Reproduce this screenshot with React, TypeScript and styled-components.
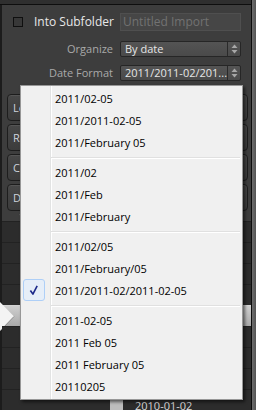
import React from 'react';
import styled, { createGlobalStyle } from 'styled-components';

const Global = createGlobalStyle`
  html, body { margin: 0; padding: 0; background: #3d3d3d; }
  body { font-family: "Open Sans", "Noto Sans", sans-serif; }
  #root { width: 256px; height: 410px; overflow: hidden; position: relative; }
`;

const Frame = styled.div`
  position: relative;
  display: flex;
  width: 256px;
  height: 410px;
  overflow: hidden;
`;

const Main = styled.div`
  flex: 1;
  display: flex;
  flex-direction: column;
  background: #3d3d3d;
  border-left: 2px solid #1c1c1c;
  border-right: 1px solid #0c0c0c;
  min-width: 0;
`;

const WindowEdge = styled.div`
  width: 4px;
  background: linear-gradient(to right, #6e6e6e, #545454);
`;

const TopStrip = styled.div`
  height: 5px;
  background: #2f2f2f;
  border-bottom: 1px solid #0e0e0e;
  margin-left: -2px;
`;

const Row = styled.div<{ $top: number; $h: number }>`
  display: flex;
  align-items: center;
  height: ${(p) => p.$h}px;
  margin-top: ${(p) => p.$top}px;
  padding-right: 10px;
`;

const CheckBox = styled.div`
  box-sizing: border-box;
  width: 10px;
  height: 10px;
  margin-left: 11px;
  border: 1px solid #0f0f0f;
  background: #383838;
`;

const BrightLabel = styled.span`
  margin-left: 11px;
  font-size: 12px;
  color: #e8e8e8;
  white-space: nowrap;
`;

const TextField = styled.div`
  box-sizing: border-box;
  margin-left: auto;
  width: 121px;
  height: 18px;
  background: #464646;
  border: 1px solid #4f4f4f;
  color: #727272;
  font-size: 12px;
  line-height: 16px;
  padding-left: 2px;
  white-space: nowrap;
`;

const FieldLabel = styled.span`
  width: 111px;
  text-align: right;
  font-size: 11px;
  color: #a9a9a9;
  white-space: nowrap;
`;

const Select = styled.div`
  box-sizing: border-box;
  margin-left: 7px;
  width: 121px;
  height: 16px;
  display: flex;
  background: linear-gradient(#545454, #4a4a4a);
  border: 1px solid #262626;
  border-radius: 2px;
  color: #e6e6e6;
  font-size: 11px;
  line-height: 14px;
`;

const SelectText = styled.span`
  flex: 1;
  padding-left: 4px;
  white-space: nowrap;
  overflow: hidden;
`;

const SelectArrows = styled.span`
  width: 12px;
  border-left: 1px solid #2a2a2a;
  display: flex;
  align-items: center;
  justify-content: center;
`;

const Buttons = styled.div`
  display: flex;
  flex-direction: column;
  gap: 3px;
  margin: 13px 3px 0 5px;
`;

const PanelButton = styled.div`
  box-sizing: border-box;
  height: 27px;
  border: 1px solid #1d1d1d;
  border-radius: 4px;
  background: linear-gradient(#474747, #3c3c3c);
  box-shadow: inset 0 1px 0 #545454;
  color: #cdd3dc;
  font-size: 11px;
  line-height: 25px;
  padding-left: 5px;
  white-space: nowrap;
  overflow: hidden;
`;

const Disclosure = styled.div`
  height: 14px;
  padding-left: 17px;
  display: flex;
  align-items: center;
`;

const List = styled.div`
  display: flex;
  flex-direction: column;
  background: #2a2a2a;
`;

const ListRow = styled.div<{ $sel?: boolean }>`
  position: relative;
  box-sizing: border-box;
  height: 21px;
  border-top: 1px solid ${(p) => (p.$sel ? '#d4d4d4' : '#222')};
  background: ${(p) => (p.$sel ? 'linear-gradient(#cfcfcf, #a9a9a9)' : '#2c2c2c')};
  display: flex;
  align-items: center;
`;

const RowMarker = styled.svg`
  position: absolute;
  left: -2px;
  top: -4px;
`;

const SmallBox = styled.div`
  width: 13px;
  height: 11px;
  margin-left: 108px;
  background: #bdbdbd;
  margin-top: 8px;
`;

const RowText = styled.span`
  margin-left: 12px;
  margin-top: 10px;
  font-size: 11px;
  color: #dadada;
`;

/* dropdown menu (overlay) */
const Menu = styled.div`
  position: absolute;
  left: 20px;
  top: 85px;
  width: 223px;
  box-sizing: border-box;
  border: 1px solid #979797;
  padding: 1px 2px 2px 2px;
  background:
    linear-gradient(to right, transparent 29px, #e2e3e3 29px, #e2e3e3 30px, #ffffff 30px, #ffffff 31px, transparent 31px),
    #f0f0f0;
  box-shadow: 2px 2px 3px rgba(0, 0, 0, 0.55);
  display: flex;
  flex-direction: column;
  font-family: "Open Sans", "Noto Sans", sans-serif;
`;

const Item = styled.div`
  display: flex;
  align-items: center;
  height: 22px;
`;

const CheckSlot = styled.span<{ $on?: boolean }>`
  box-sizing: border-box;
  width: 22px;
  height: 22px;
  border-radius: 3px;
  border: 1px solid ${(p) => (p.$on ? '#aecff7' : 'transparent')};
  background: ${(p) => (p.$on ? '#e6eef8' : 'transparent')};
  display: flex;
  align-items: center;
  justify-content: center;
`;

const ItemText = styled.span`
  margin-left: 10px;
  font-size: 11px;
  color: #000;
  white-space: nowrap;
`;

const Separator = styled.div`
  height: 8px;
  box-sizing: border-box;
  padding-top: 4px;
  margin-left: 28px;
  &::before {
    content: '';
    display: block;
    height: 1px;
    background: #e0e0e0;
    border-bottom: 1px solid #ffffff;
  }
`;

const groups: string[][] = [
  ['2011/02-05', '2011/2011-02-05', '2011/February 05'],
  ['2011/02', '2011/Feb', '2011/February'],
  ['2011/02/05', '2011/February/05', '2011/2011-02/2011-02-05'],
  ['2011-02-05', '2011 Feb 05', '2011 February 05', '20110205'],
];
const selected = '2011/2011-02/2011-02-05';

const UpDown = () => (
  <svg width="7" height="10" viewBox="0 0 7 10">
    <path d="M3.5 0.5 L6.5 4 L0.5 4 Z" fill="#a8a8a8" />
    <path d="M0.5 6 L6.5 6 L3.5 9.5 Z" fill="#a8a8a8" />
  </svg>
);

const Check = () => (
  <svg width="22" height="22" viewBox="0 0 22 22">
    <path d="M7 11.5 L9.8 15.5 L14.5 6.5" fill="none" stroke="#1d2a8a" strokeWidth="1.8" strokeLinejoin="round" />
  </svg>
);

export default function App() {
  return (
    <>
      <Global />
      <Frame>
        <Main>
          <TopStrip />
          <Row $top={8} $h={18}>
            <CheckBox />
            <BrightLabel>Into Subfolder</BrightLabel>
            <TextField>Untitled Import</TextField>
          </Row>
          <Row $top={10} $h={16}>
            <FieldLabel>Organize</FieldLabel>
            <Select>
              <SelectText>By date</SelectText>
              <SelectArrows><UpDown /></SelectArrows>
            </Select>
          </Row>
          <Row $top={8} $h={16}>
            <FieldLabel>Date Format</FieldLabel>
            <Select>
              <SelectText>2011/2011-02/201...</SelectText>
              <SelectArrows><UpDown /></SelectArrows>
            </Select>
          </Row>
          <Buttons>
            <PanelButton>Lo</PanelButton>
            <PanelButton>Re</PanelButton>
            <PanelButton>C</PanelButton>
            <PanelButton>D</PanelButton>
          </Buttons>
          <Disclosure>
            <svg width="5" height="4" viewBox="0 0 5 4">
              <path d="M0 0 L5 0 L2.5 4 Z" fill="#5a5a5a" />
            </svg>
          </Disclosure>
          <List>
            <ListRow />
            <ListRow />
            <ListRow />
            <ListRow />
            <ListRow $sel>
              <RowMarker width="16" height="29" viewBox="0 0 16 29">
                <path d="M0 0 L14 14.5 L0 29 Z" fill="#f4f4f4" />
                <path d="M14 14.5 L0 29" stroke="#8a8a8a" strokeWidth="1" />
              </RowMarker>
            </ListRow>
            <ListRow />
            <ListRow />
            <ListRow />
            <ListRow>
              <SmallBox />
              <RowText>2010-01-02</RowText>
            </ListRow>
          </List>
        </Main>
        <WindowEdge />
        <Menu>
          {groups.map((g, gi) => (
            <React.Fragment key={gi}>
              {gi > 0 && <Separator />}
              {g.map((t) => (
                <Item key={t}>
                  <CheckSlot $on={t === selected}>{t === selected && <Check />}</CheckSlot>
                  <ItemText>{t}</ItemText>
                </Item>
              ))}
            </React.Fragment>
          ))}
        </Menu>
      </Frame>
    </>
  );
}
